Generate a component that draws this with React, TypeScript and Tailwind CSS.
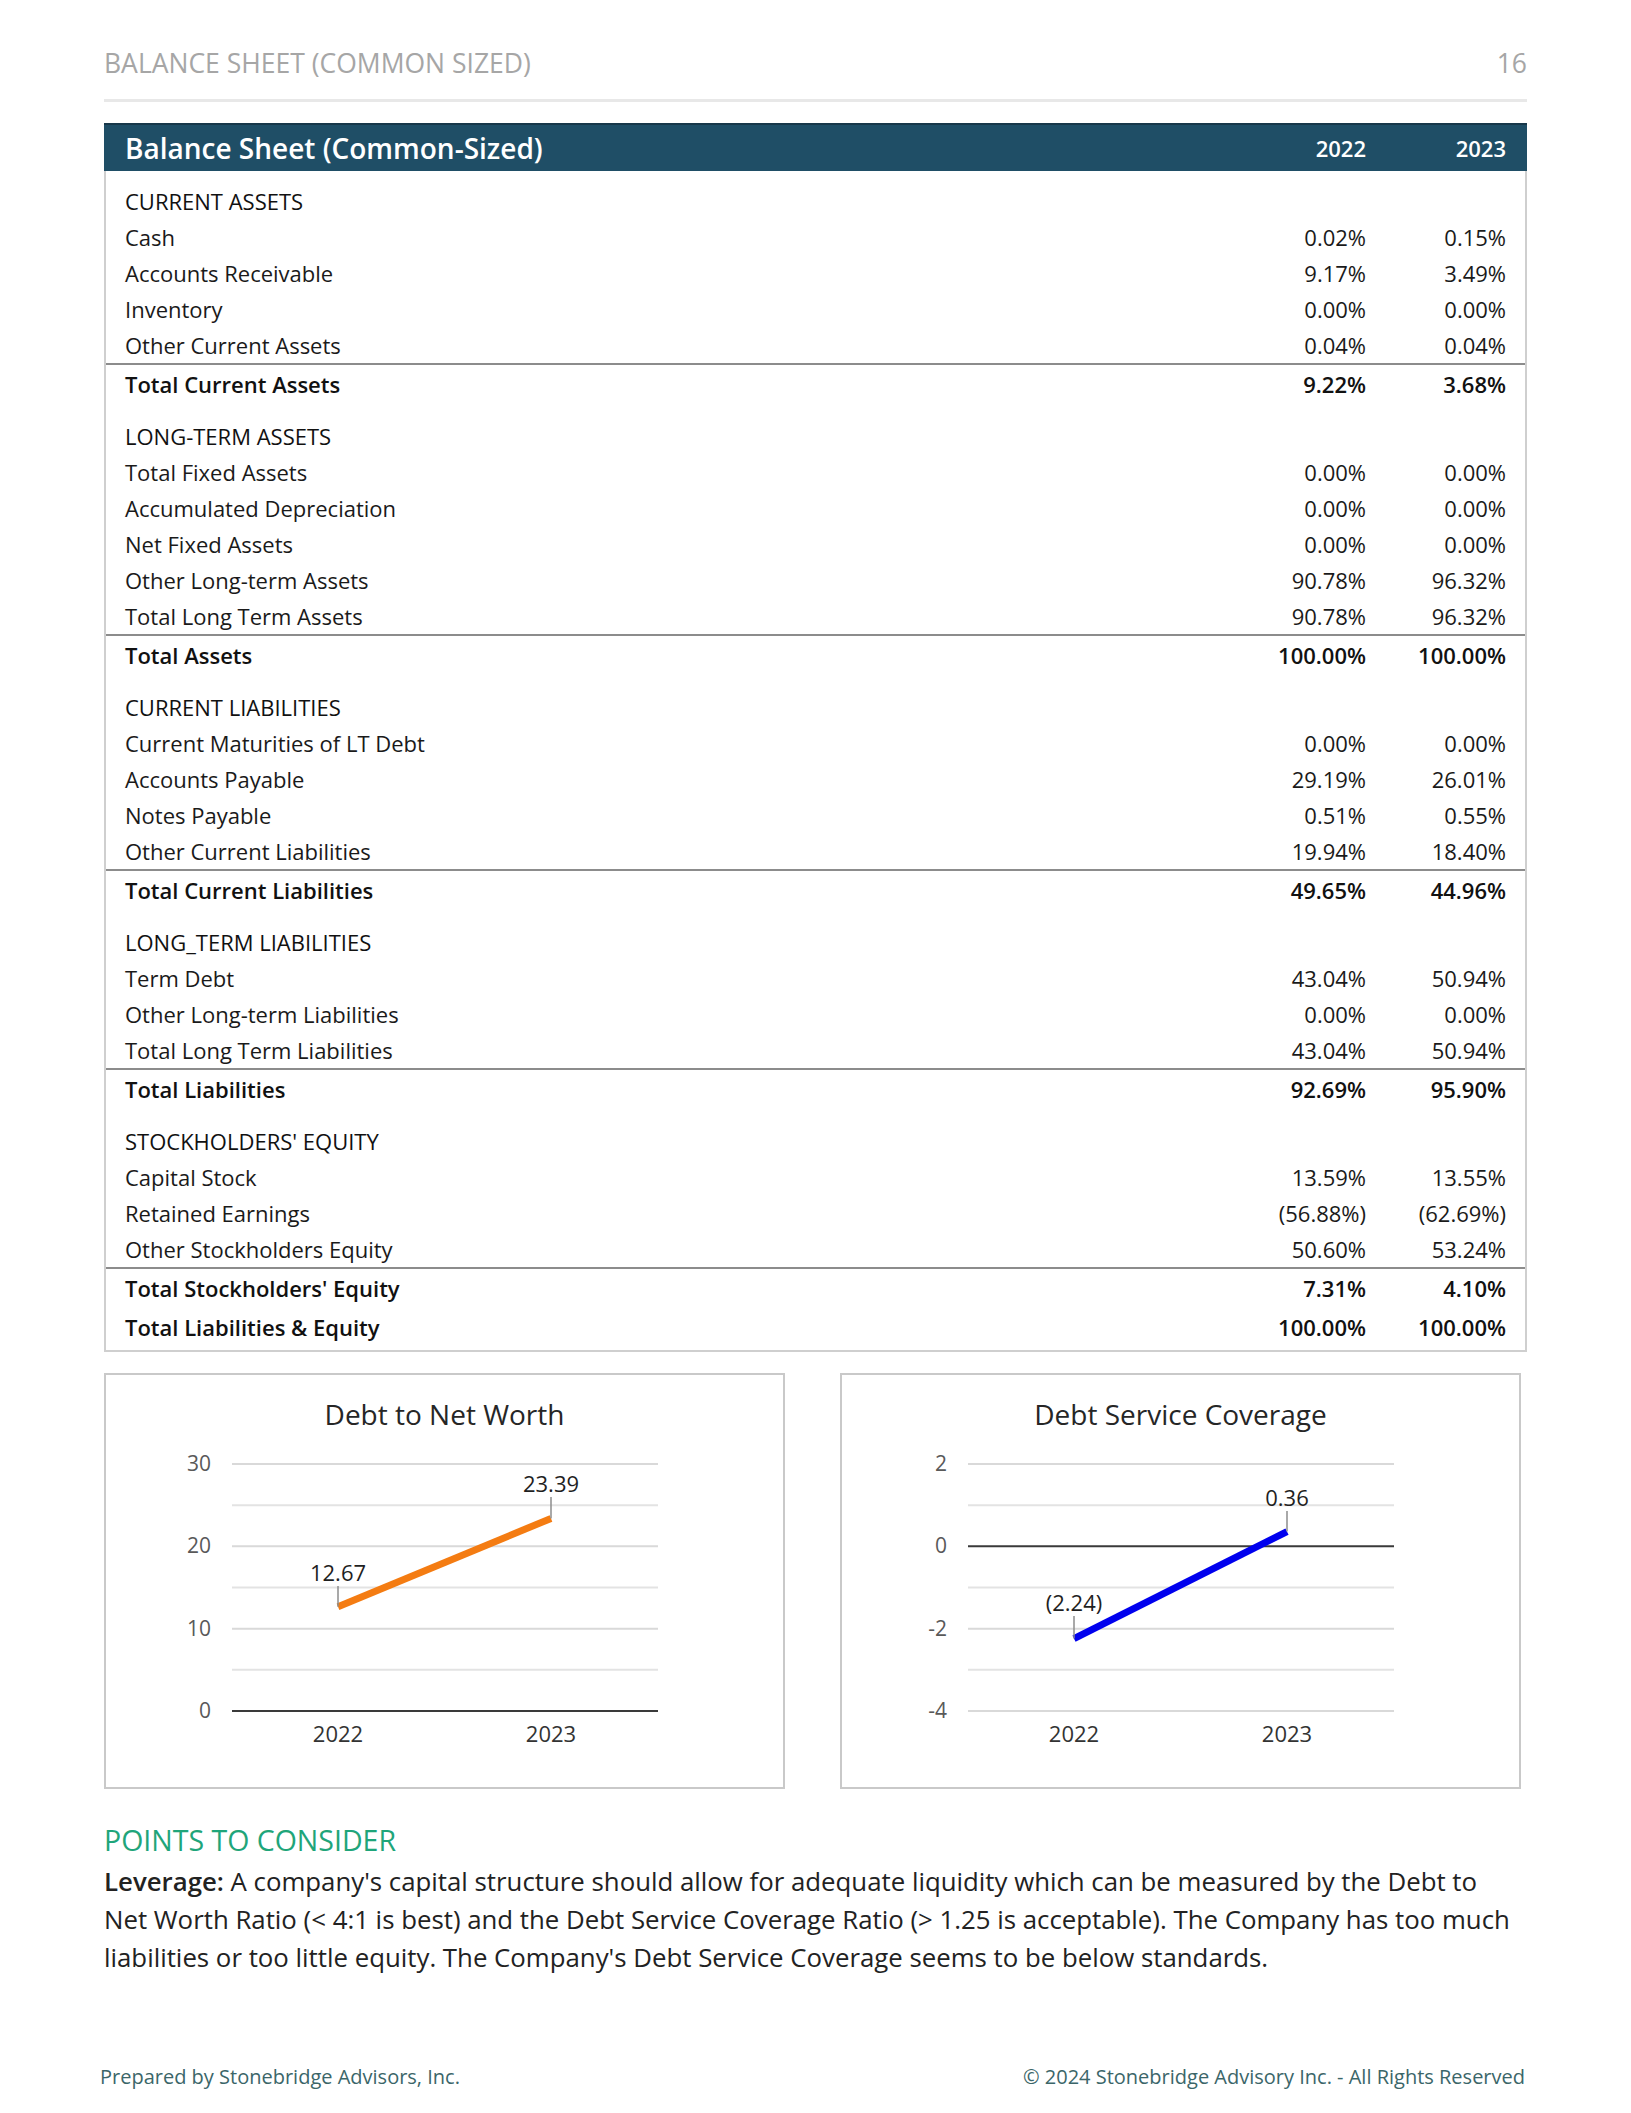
import React from 'react';

type Line = { label: string; a: string; b: string };
type Section = { title: string; rows: Line[]; total: Line };

const sections: Section[] = [
  {
    title: 'CURRENT ASSETS',
    rows: [
      { label: 'Cash', a: '0.02%', b: '0.15%' },
      { label: 'Accounts Receivable', a: '9.17%', b: '3.49%' },
      { label: 'Inventory', a: '0.00%', b: '0.00%' },
      { label: 'Other Current Assets', a: '0.04%', b: '0.04%' },
    ],
    total: { label: 'Total Current Assets', a: '9.22%', b: '3.68%' },
  },
  {
    title: 'LONG-TERM ASSETS',
    rows: [
      { label: 'Total Fixed Assets', a: '0.00%', b: '0.00%' },
      { label: 'Accumulated Depreciation', a: '0.00%', b: '0.00%' },
      { label: 'Net Fixed Assets', a: '0.00%', b: '0.00%' },
      { label: 'Other Long-term Assets', a: '90.78%', b: '96.32%' },
      { label: 'Total Long Term Assets', a: '90.78%', b: '96.32%' },
    ],
    total: { label: 'Total Assets', a: '100.00%', b: '100.00%' },
  },
  {
    title: 'CURRENT LIABILITIES',
    rows: [
      { label: 'Current Maturities of LT Debt', a: '0.00%', b: '0.00%' },
      { label: 'Accounts Payable', a: '29.19%', b: '26.01%' },
      { label: 'Notes Payable', a: '0.51%', b: '0.55%' },
      { label: 'Other Current Liabilities', a: '19.94%', b: '18.40%' },
    ],
    total: { label: 'Total Current Liabilities', a: '49.65%', b: '44.96%' },
  },
  {
    title: 'LONG_TERM LIABILITIES',
    rows: [
      { label: 'Term Debt', a: '43.04%', b: '50.94%' },
      { label: 'Other Long-term Liabilities', a: '0.00%', b: '0.00%' },
      { label: 'Total Long Term Liabilities', a: '43.04%', b: '50.94%' },
    ],
    total: { label: 'Total Liabilities', a: '92.69%', b: '95.90%' },
  },
  {
    title: "STOCKHOLDERS' EQUITY",
    rows: [
      { label: 'Capital Stock', a: '13.59%', b: '13.55%' },
      { label: 'Retained Earnings', a: '(56.88%)', b: '(62.69%)' },
      { label: 'Other Stockholders Equity', a: '50.60%', b: '53.24%' },
    ],
    total: { label: "Total Stockholders' Equity", a: '7.31%', b: '4.10%' },
  },
];

const Row = ({ row }: { row: Line }) => (
  <div className="flex h-[36px] items-center pl-[19px] pr-[19px] text-[22px] text-[#1a1a1a]">
    <span className="flex-1">{row.label}</span>
    <span className="w-[140px] text-right">{row.a}</span>
    <span className="w-[140px] text-right">{row.b}</span>
  </div>
);

const TotalRow = ({ row, border = true }: { row: Line; border?: boolean }) => (
  <div
    className={`flex h-[40px] items-center pl-[19px] pr-[19px] text-[22px] font-semibold text-[#111] ${
      border ? 'border-t-2 border-[#8c8c8c]' : ''
    }`}
  >
    <span className="flex-1">{row.label}</span>
    <span className="w-[140px] text-right">{row.a}</span>
    <span className="w-[140px] text-right">{row.b}</span>
  </div>
);

interface ChartProps {
  title: string;
  ticks: { v: string; y: number }[];
  zeroY: number;
  color: string;
  points: { y: number; label: string; labelY: number }[];
}

const Chart = ({ title, ticks, zeroY, color, points }: ChartProps) => {
  const xs = [232, 445];
  return (
    <div className="h-[416px] w-[681px] border-2 border-[#c9c9c9] bg-white">
      <div className="pt-[20px] text-center text-[28px] leading-[38px] text-[#262626]">{title}</div>
      <svg width="677" height="350" viewBox="0 0 677 350" className="block">
        {/* minor gridlines between labelled ticks */}
        {ticks.slice(0, -1).map((t, i) => (
          <line
            key={'m' + i}
            x1="126"
            x2="552"
            y1={(t.y + ticks[i + 1].y) / 2}
            y2={(t.y + ticks[i + 1].y) / 2}
            stroke="#e3e3e3"
            strokeWidth="2"
          />
        ))}
        {ticks.map((t) => (
          <g key={t.v}>
            <line
              x1="126"
              x2="552"
              y1={t.y}
              y2={t.y}
              stroke={t.y === zeroY ? '#3a3a3a' : '#d9d9d9'}
              strokeWidth="2"
            />
            <text x="105" y={t.y + 7} textAnchor="end" fontSize="21" fill="#595959" fontFamily="Open Sans, sans-serif">
              {t.v}
            </text>
          </g>
        ))}
        <line x1={xs[0]} y1={points[0].y} x2={xs[1]} y2={points[1].y} stroke={color} strokeWidth="7" />
        {points.map((p, i) => (
          <g key={p.label}>
            <line x1={xs[i]} x2={xs[i]} y1={p.labelY + 13} y2={p.y} stroke="#8c8c8c" strokeWidth="1.5" />
            <text
              x={xs[i]}
              y={p.labelY + 8}
              textAnchor="middle"
              fontSize="22"
              fill="#1f1f1f"
              fontFamily="Open Sans, sans-serif"
            >
              {p.label}
            </text>
          </g>
        ))}
        {['2022', '2023'].map((yr, i) => (
          <text
            key={yr}
            x={xs[i]}
            y="309"
            textAnchor="middle"
            fontSize="22"
            fill="#333"
            fontFamily="Open Sans, sans-serif"
          >
            {yr}
          </text>
        ))}
      </svg>
    </div>
  );
};

const step = 41.17;

export default function App() {
  return (
    <div className="flex h-[2113px] w-[1631px] flex-col bg-white px-[104px] font-['Open_Sans',sans-serif]">
      <div className="flex items-center justify-between pt-[45px] text-[26.5px] leading-[36px] text-[#a6a6a6]">
        <span>BALANCE SHEET (COMMON SIZED)</span>
        <span>16</span>
      </div>
      <div className="mt-[18px] h-[3px] bg-[#e8e8e8]" />

      <div className="mt-[21px]">
        <div className="flex h-[48px] items-center border-t-2 border-[#18384a] bg-[#1f4e66] pl-[21px] pr-[21px] text-white">
          <span className="flex-1 text-[28px] font-semibold">Balance Sheet (Common-Sized)</span>
          <span className="w-[140px] text-right text-[22px] font-semibold">2022</span>
          <span className="w-[140px] text-right text-[22px] font-semibold">2023</span>
        </div>
        <div className="border-x-2 border-b-2 border-[#cfcfcf] pb-[3px] pt-[12px]">
          {sections.map((s, i) => (
            <div key={s.title} className={i < sections.length - 1 ? 'mb-[15px]' : ''}>
              <div className="flex h-[36px] items-center pl-[19px] text-[22px] font-medium uppercase text-[#111]">
                {s.title}
              </div>
              {s.rows.map((r) => (
                <Row key={r.label} row={r} />
              ))}
              <TotalRow row={s.total} />
            </div>
          ))}
          <TotalRow row={{ label: 'Total Liabilities & Equity', a: '100.00%', b: '100.00%' }} border={false} />
        </div>
      </div>

      <div className="mt-[21px] flex gap-[55px]">
        <Chart
          title="Debt to Net Worth"
          ticks={['30', '20', '10', '0'].map((v, i) => ({ v, y: 31 + i * 2 * step }))}
          zeroY={31 + 6 * step}
          color="#f47c12"
          points={[
            { y: 31 + 6 * step - 12.67 * (step / 5), label: '12.67', labelY: 140 },
            { y: 31 + 6 * step - 23.39 * (step / 5), label: '23.39', labelY: 51 },
          ]}
        />
        <Chart
          title="Debt Service Coverage"
          ticks={['2', '0', '-2', '-4'].map((v, i) => ({ v, y: 31 + i * 2 * step }))}
          zeroY={31 + 2 * step}
          color="#0000ee"
          points={[
            { y: 31 + 4.24 * step, label: '(2.24)', labelY: 170 },
            { y: 31 + 1.64 * step, label: '0.36', labelY: 65 },
          ]}
        />
      </div>

      <div className="mt-[34px] text-[28.5px] leading-[34px] text-[#1fa57a]">POINTS TO CONSIDER</div>
      <p className="mt-[5px] pr-[7px] text-[25.8px] leading-[38px] text-[#222]">
        <span className="font-semibold">Leverage:</span> A company's capital structure should allow for adequate liquidity
        which can be measured by the Debt to Net Worth Ratio (&lt; 4:1 is best) and the Debt Service Coverage Ratio (&gt;
        1.25 is acceptable). The Company has too much liabilities or too little equity. The Company's Debt Service Coverage
        seems to be below standards.
      </p>

      <div className="-mx-[4px] mt-auto flex justify-between pb-[22px] text-[20px] leading-[28px] text-[#3b6669]">
        <span>Prepared by Stonebridge Advisors, Inc.</span>
        <span className="mr-[6px]">© 2024 Stonebridge Advisory Inc. - All Rights Reserved</span>
      </div>
    </div>
  );
}
